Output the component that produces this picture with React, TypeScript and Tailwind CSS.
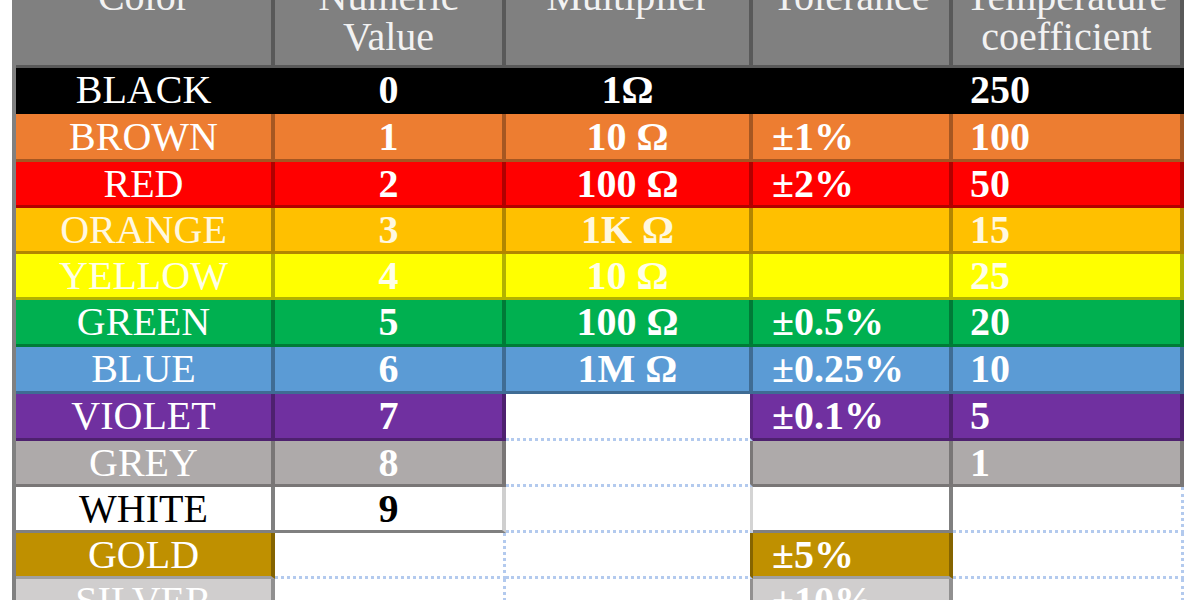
import React from "react";

const D = "border-r-4 border-r-[rgba(0,0,0,0.3)]";
const DB = "border-b-[3px] border-b-[rgba(0,0,0,0.3)]";
const GR = "border-r-4 border-r-[#808080]";
const GB = "border-b-[3px] border-b-[#808080]";
const DOTB = "border-b-[3px] border-b-[#b3caee] [border-bottom-style:dotted]";
const DOTR = "border-r-[3px] border-r-[#b3caee] [border-right-style:dotted]";

const COLS = [
  "justify-center font-normal",
  "justify-center font-bold",
  "justify-center font-bold",
  "justify-start pl-[19px] font-bold",
  "justify-start pl-[17px] font-bold",
];

type Cell = { t?: string; cls: string };

function uniform(bg: string, fg: string, texts: string[]): Cell[] {
  return texts.map((t) => ({ t, cls: `${bg} ${fg} ${D} ${DB}` }));
}

const rows: Cell[][] = [
  uniform("bg-black", "text-white", ["BLACK", "0", "1Ω", "", "250"]),
  uniform("bg-[#ed7d31]", "text-white", ["BROWN", "1", "10 Ω", "±1%", "100"]),
  uniform("bg-[#ff0000]", "text-white", ["RED", "2", "100 Ω", "±2%", "50"]),
  uniform("bg-[#ffc000]", "text-[#fff8e0]", ["ORANGE", "3", "1K Ω", "", "15"]),
  uniform("bg-[#ffff00]", "text-[#ffffe8]", ["YELLOW", "4", "10 Ω", "", "25"]),
  uniform("bg-[#00b050]", "text-white", ["GREEN", "5", "100 Ω", "±0.5%", "20"]),
  uniform("bg-[#5b9bd5]", "text-white", ["BLUE", "6", "1M Ω", "±0.25%", "10"]),
  [
    { t: "VIOLET", cls: `bg-[#7030a0] text-white ${D} ${DB}` },
    { t: "7", cls: `bg-[#7030a0] text-white ${D} ${DB}` },
    { cls: `bg-white border-r-[3px] border-r-[#5a2680] ${DOTB}` },
    { t: "±0.1%", cls: `bg-[#7030a0] text-white ${D} ${DB}` },
    { t: "5", cls: `bg-[#7030a0] text-white ${D} ${DB}` },
  ],
  [
    { t: "GREY", cls: `bg-[#aeaaaa] text-white ${D} ${DB}` },
    { t: "8", cls: `bg-[#aeaaaa] text-white ${D} ${DB}` },
    { cls: `bg-white border-r-[3px] border-r-[#7a7777] ${DOTB}` },
    { cls: `bg-[#aeaaaa] text-white ${D} ${DB}` },
    { t: "1", cls: `bg-[#aeaaaa] text-white ${D} ${DB}` },
  ],
  [
    { t: "WHITE", cls: `bg-white text-black ${GR} ${GB}` },
    { t: "9", cls: `bg-white text-black border-r-4 border-r-[#cfcfcf] ${GB}` },
    { cls: `bg-white border-r-[3px] border-r-[#d4d4d4] ${DOTB}` },
    { cls: `bg-white ${GR} ${GB}` },
    { cls: `bg-white ${DOTR} ${DOTB}` },
  ],
  [
    { t: "GOLD", cls: `bg-[#bf9000] text-white ${D} border-b-[3px] border-b-[#a0a0a0]` },
    { cls: `bg-white ${DOTR} ${DOTB}` },
    { cls: `bg-white border-r-[3px] border-r-[#866500] ${DOTB}` },
    { t: "±5%", cls: `bg-[#bf9000] text-white ${D} border-b-[3px] border-b-[#a0a0a0]` },
    { cls: `bg-white ${DOTR} ${DOTB}` },
  ],
  [
    { t: "SILVER", cls: `bg-[#d0cece] text-white ${D} ${DB}` },
    { cls: `bg-white ${DOTR} ${DOTB}` },
    { cls: `bg-white border-r-[3px] border-r-[#929090] ${DOTB}` },
    { t: "±10%", cls: `bg-[#d0cece] text-white ${D} ${DB}` },
    { cls: `bg-white ${DOTR} ${DOTB}` },
  ],
];

const headers: string[][] = [
  ["Color"],
  ["Numeric", "Value"],
  ["Multiplier"],
  ["Tolerance"],
  ["Temperature", "coefficient"],
];

export default function App() {
  return (
    <div className="w-[1200px] h-[600px] overflow-hidden bg-white font-['Liberation_Serif',serif] text-[40px] leading-[40px]">
      <div className="ml-[12px] w-[1172px] border-l-4 border-l-[#808080]">
        <div className="grid grid-cols-[259px_231px_247px_200px_231px] grid-rows-[68px_46px_48px_46px_46px_46px_47px_47px_47px_46px_46px_46px_46px]">
          {headers.map((lines, i) => (
            <div
              key={`h${i}`}
              className={`bg-[#808080] text-[#f2f2f2] ${D} ${DB} flex flex-col items-center overflow-hidden`}
            >
              <div className="-mt-[23px] flex flex-col items-center whitespace-nowrap">
                {lines.map((l) => (
                  <span key={l} className="block h-[40px] leading-[40px]">
                    {l}
                  </span>
                ))}
              </div>
            </div>
          ))}
          {rows.map((row, ri) =>
            row.map((c, ci) => (
              <div
                key={`${ri}-${ci}`}
                className={`flex items-center overflow-hidden whitespace-nowrap ${COLS[ci]} ${c.cls}`}
              >
                {c.t}
              </div>
            ))
          )}
        </div>
      </div>
    </div>
  );
}
